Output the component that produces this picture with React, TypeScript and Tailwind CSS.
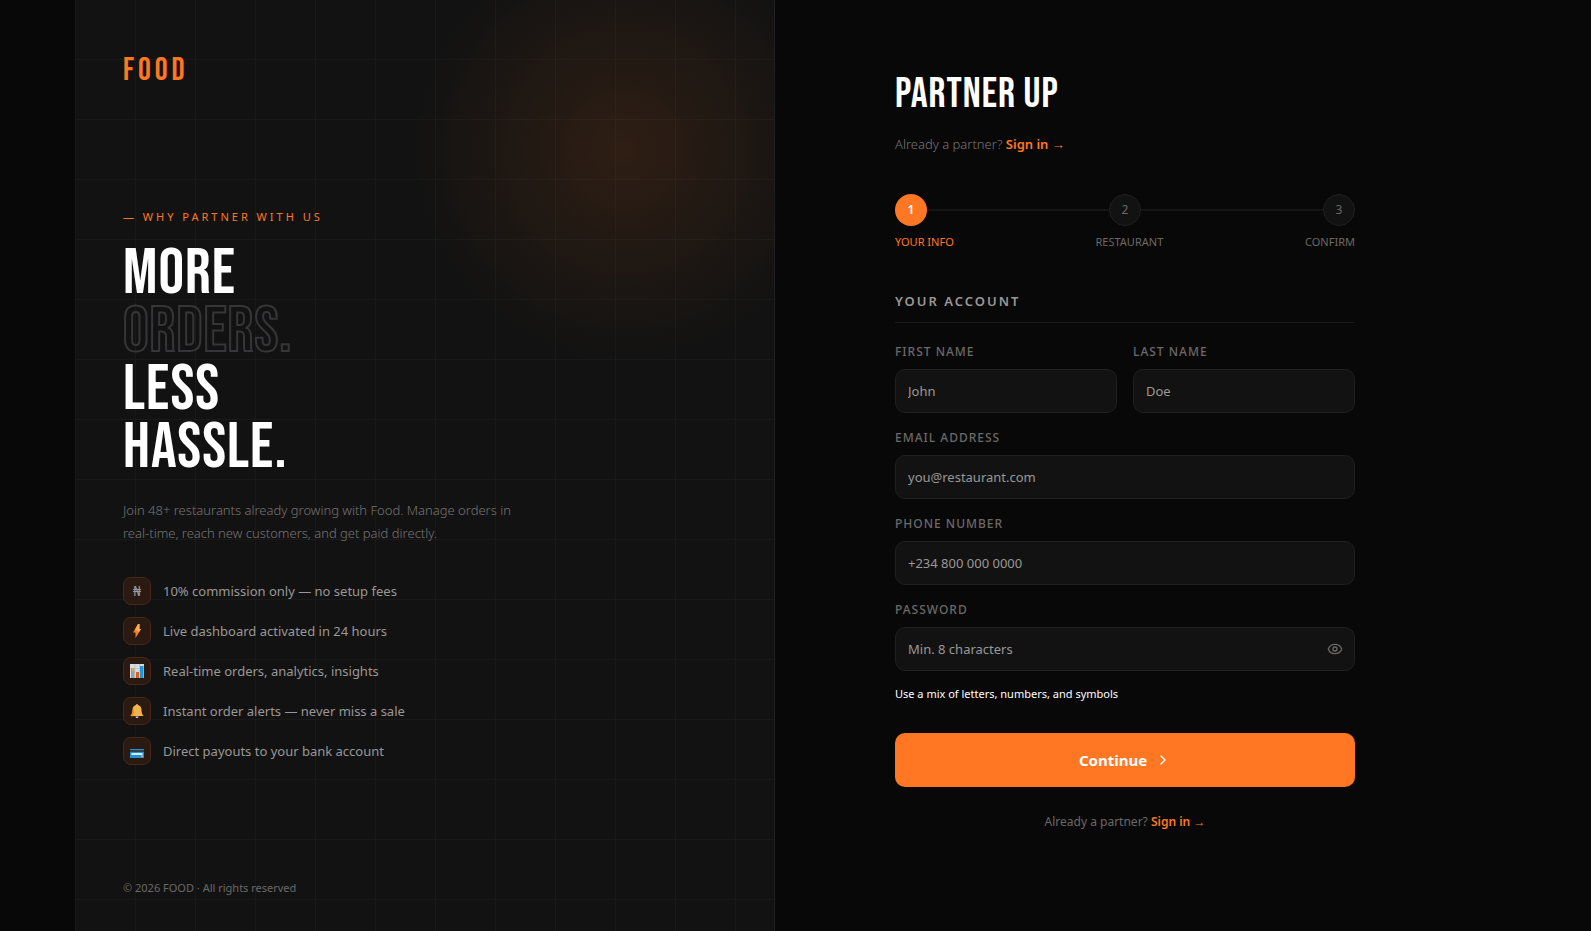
import { useState, type ReactNode } from "react";
import { ChevronRight, Eye, EyeOff } from "lucide-react";

const display = "font-['Bebas_Neue','Liberation_Sans_Narrow',sans-serif] font-normal";

const perks = [
    { icon: <span className="text-sm text-[#a09c98]">₦</span>, text: "10% commission only — no setup fees" },
    { icon: <BoltIcon />, text: "Live dashboard activated in 24 hours" },
    { icon: <ChartIcon />, text: "Real-time orders, analytics, insights" },
    { icon: <BellIcon />, text: "Instant order alerts — never miss a sale" },
    { icon: <CardIcon />, text: "Direct payouts to your bank account" },
];

const steps = ["Your Info", "Restaurant", "Confirm"];

function BoltIcon() {
    return (
        <svg width="14" height="14" viewBox="0 0 14 14">
            <path d="M8 0h1.500v5H11L5.500 14V8.500H3z" fill="#ff7a22" />
            <path d="M8 0h1.500v5H11L9 8 5 5.500z" fill="#f2b04a" />
        </svg>
    );
}

function ChartIcon() {
    return (
        <svg width="14" height="14" viewBox="0 0 14 14">
            <rect width="14" height="14" fill="#d5dde2" />
            <path d="M5 0v14M9.500 0v14M0 4.500h14" stroke="#b3bdc4" strokeWidth="0.600" />
            <rect x="1" y="4" width="3.500" height="10" fill="#9a9fa2" />
            <rect x="2" y="4" width="1.500" height="3" fill="#f2a53a" />
            <rect x="6" y="8" width="3" height="6" fill="#d9601f" />
            <rect x="10" y="2" width="3.500" height="12" fill="#2196d6" />
        </svg>
    );
}

function BellIcon() {
    return (
        <svg width="14" height="14" viewBox="0 0 14 14">
            <path d="M6 1a1 1 0 0 1 2 0c2.500.6 3.500 2.400 3.500 5 0 2.500.5 4 2 6H.5c1.500-2 2-3.500 2-6C2.500 3.400 3.500 1.600 6 1z" fill="#f0b44c" />
            <path d="M.5 12c1.500-2 2-3.500 2-6l1.500-.5c0 3-.5 5-1 7z" fill="#f08a2c" />
            <path d="M5.500 12.500h3a1.500 1.500 0 0 1-3 0z" fill="#e3dccb" />
        </svg>
    );
}

function CardIcon() {
    return (
        <svg width="14" height="14" viewBox="0 0 14 14">
            <rect y="5" width="14" height="9" rx="0.500" fill="#1e93d6" />
            <rect y="6" width="14" height="2" fill="#31424d" />
            <rect x="1.500" y="9" width="11" height="2" fill="#dbe9f2" />
            <rect x="11" y="11.500" width="2" height="1.500" fill="#f0b44c" />
        </svg>
    );
}

function Field({ id, label, type = "text", placeholder, children }: {
    id: string;
    label: string;
    type?: string;
    placeholder: string;
    children?: ReactNode;
}) {
    return (
        <div>
            <label htmlFor={id} className="block text-xs leading-[18px] font-medium tracking-[1px] uppercase text-[#6b6967]">
                {label}
            </label>
            <div className="relative mt-2">
                <input
                    id={id}
                    type={type}
                    placeholder={placeholder}
                    className="block w-full h-11 rounded-[10px] border border-[#1f1f24] bg-[#121212] px-3 text-[13px] text-white placeholder:text-[#9a9896] outline-none focus:border-[#ff7722]"
                />
                {children}
            </div>
        </div>
    );
}

function BrandPanel() {
    return (
        <aside className="relative w-1/2 flex flex-col justify-between overflow-hidden border-r border-[#1f1f24] bg-[#121212] px-12 pt-12 pb-[34px]">
            <div className="absolute inset-0 bg-[linear-gradient(#191919_1px,transparent_1px),linear-gradient(90deg,#191919_1px,transparent_1px)] bg-[size:60px_60px] bg-[position:0_-1px]" />
            <div className="absolute -top-[100px] -right-[100px] size-[500px] bg-[radial-gradient(circle,rgba(255,119,34,0.12)_0%,transparent_60%)]" />

            <div className={`${display} relative text-[32px] leading-[46px] tracking-[4px] text-[#ff7722]`}>FOOD</div>

            <div className="relative">
                <p className="text-[11px] leading-4 tracking-[3px] uppercase text-[#ff7722]">— Why partner with us</p>
                <h1 className={`${display} mt-5 text-[64px] leading-[58px] tracking-[1px] text-white`}>
                    MORE<br />
                    <span className="text-transparent [-webkit-text-stroke:2px_#363638]">ORDERS.</span><br />
                    LESS<br />
                    HASSLE.
                </h1>
                <p className="mt-[22px] max-w-[400px] text-[13px] leading-[23px] font-light text-[#777472]">
                    Join 48+ restaurants already growing with Food. Manage orders in real-time, reach new customers, and get paid directly.
                </p>
                <ul className="mt-8 flex flex-col gap-3">
                    {perks.map((perk) => (
                        <li key={perk.text} className="flex items-center gap-3">
                            <span className="size-7 flex items-center justify-center rounded-lg border border-[#4a2615] bg-[#2a1a12]">
                                {perk.icon}
                            </span>
                            <span className="text-[13px] leading-5 text-[#9a9896]">{perk.text}</span>
                        </li>
                    ))}
                </ul>
            </div>

            <p className="relative text-[11px] leading-[18px] text-[#6b6967]">© 2026 FOOD · All rights reserved</p>
        </aside>
    );
}

function Stepper() {
    return (
        <div className="mt-[38px]">
            <div className="flex items-center">
                {steps.map((step, i) => (
                    <div key={step} className={`flex items-center ${i > 0 ? "flex-1" : ""}`}>
                        {i > 0 && <div className="h-0.5 flex-1 bg-[#151515]" />}
                        <div className={`size-8 flex items-center justify-center rounded-full text-xs ${i === 0 ? "bg-[#ff7722] font-semibold text-white" : "border border-[#1f1f1f] bg-[#121212] text-[#6b6967]"}`}>
                            {i + 1}
                        </div>
                    </div>
                ))}
            </div>
            <div className="mt-2 flex justify-between">
                {steps.map((step, i) => (
                    <span key={step} className={`text-[11px] leading-4 uppercase ${i === 0 ? "text-[#ff7722]" : "text-[#6b6967]"}`}>
                        {step}
                    </span>
                ))}
            </div>
        </div>
    );
}

export default function App() {
    const [showPassword, setShowPassword] = useState(false);

    return (
        <div className="min-h-screen bg-[#080808] pr-[41px] font-['Segoe_UI','Noto_Sans',sans-serif]">
            <div className="mx-auto flex min-h-screen max-w-[1400px]">
                <BrandPanel />

                <main className="w-1/2 px-12 pt-[74px] pb-12">
                    <form className="mx-auto max-w-[460px]" onSubmit={(e) => e.preventDefault()}>
                        <h2 className={`${display} text-[42px] leading-[42px] tracking-[1px] text-white`}>PARTNER UP</h2>
                        <p className="mt-4 text-[13px] leading-6 font-light text-[#777472]">
                            Already a partner? <a href="#" className="font-semibold text-[#ff7722]">Sign in →</a>
                        </p>

                        <Stepper />

                        <h3 className="mt-[41px] border-b border-[#1a1a1a] pb-[11px] text-[13px] leading-5 font-semibold tracking-[2px] uppercase text-[#9a9896]">
                            Your Account
                        </h3>

                        <div className="mt-5 flex flex-col gap-4">
                            <div className="grid grid-cols-2 gap-4">
                                <Field id="first" label="First Name" placeholder="John" />
                                <Field id="last" label="Last Name" placeholder="Doe" />
                            </div>
                            <Field id="email" label="Email Address" type="email" placeholder="you@restaurant.com" />
                            <Field id="phone" label="Phone Number" type="tel" placeholder="+234 800 000 0000" />
                            <Field id="password" label="Password" type={showPassword ? "text" : "password"} placeholder="Min. 8 characters">
                                <button
                                    type="button"
                                    aria-label="Toggle password"
                                    onClick={() => setShowPassword(!showPassword)}
                                    className="absolute inset-y-0 right-3 text-[#6b6967]"
                                >
                                    {showPassword ? <EyeOff size={16} /> : <Eye size={16} />}
                                </button>
                            </Field>
                        </div>
                        <p className="mt-[15px] text-[11px] leading-4 text-white">Use a mix of letters, numbers, and symbols</p>

                        <button type="submit" className="mt-[31px] flex h-[54px] w-full items-center justify-center gap-2 rounded-[10px] bg-[#ff7722] text-[15px] font-bold text-white">
                            Continue
                            <ChevronRight size={16} />
                        </button>

                        <p className="mt-6 text-center text-xs leading-[22px] text-[#6b6967]">
                            Already a partner? <a href="#" className="font-semibold text-[#ff7722]">Sign in →</a>
                        </p>
                    </form>
                </main>
            </div>
        </div>
    );
}
